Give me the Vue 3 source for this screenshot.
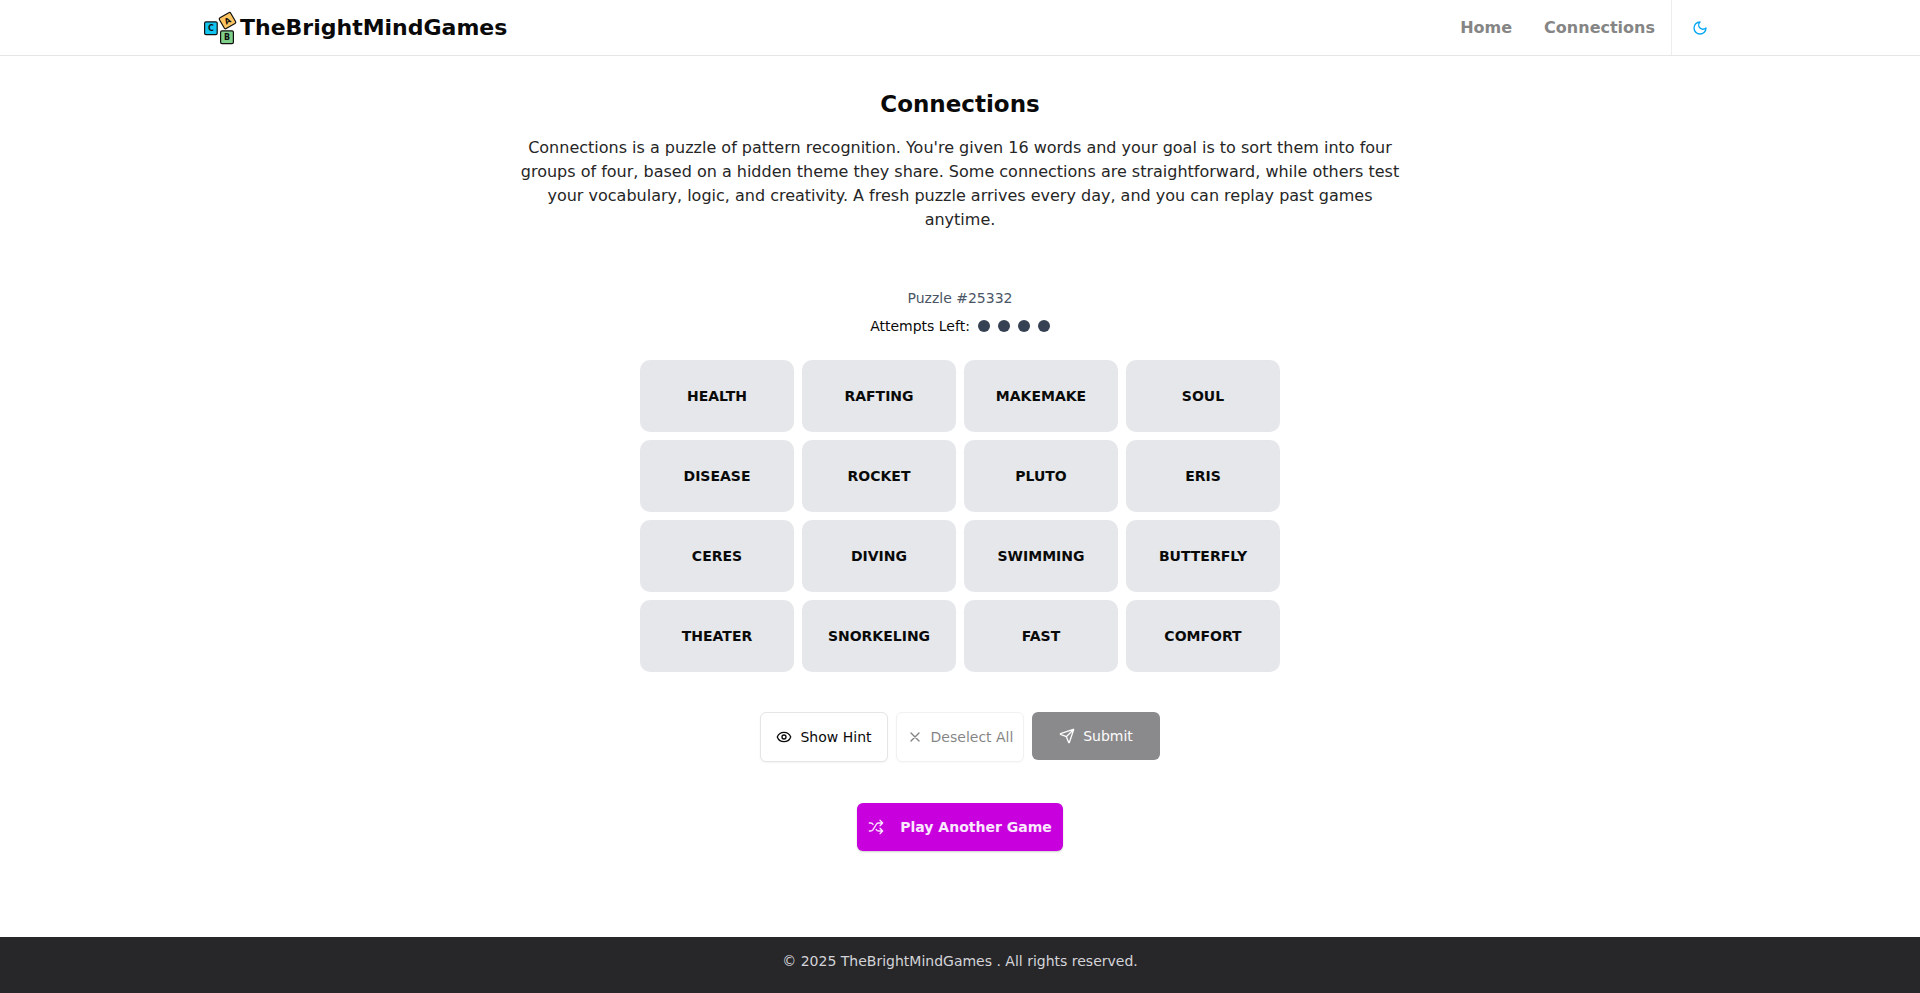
<script setup>
import { ref, computed } from 'vue'

const words = [
  'HEALTH', 'RAFTING', 'MAKEMAKE', 'SOUL',
  'DISEASE', 'ROCKET', 'PLUTO', 'ERIS',
  'CERES', 'DIVING', 'SWIMMING', 'BUTTERFLY',
  'THEATER', 'SNORKELING', 'FAST', 'COMFORT',
]
const attempts = 4
const selected = ref([])
const canDeselect = computed(() => selected.value.length > 0)
const canSubmit = computed(() => selected.value.length === 4)

function toggle(word) {
  if (selected.value.includes(word)) {
    selected.value = selected.value.filter((w) => w !== word)
  } else if (selected.value.length < 4) {
    selected.value = [...selected.value, word]
  }
}
</script>

<template>
  <div class="page">
    <header class="header">
      <div class="header-inner">
        <a class="brand" href="#">
          <svg class="logo" viewBox="0 0 32 32" aria-hidden="true">
            <g stroke="#111" stroke-width="1.2">
              <rect x="0.6" y="9.9" width="12.6" height="12.8" rx="1.4" fill="#12c5f0" />
              <rect x="16.6" y="18.9" width="12.8" height="12.8" rx="1.4" fill="#7fd08a" />
              <rect x="17" y="2.4" width="13" height="12.4" rx="1.4" fill="#fdc562" transform="rotate(-30 23.5 8.6)" />
            </g>
            <g class="logo-letters" text-anchor="middle">
              <text x="6.9" y="19.2">C</text>
              <text x="23" y="28.2">B</text>
              <text x="23.5" y="11.5" transform="rotate(-30 23.5 8.6)">A</text>
            </g>
          </svg>
          <span>TheBrightMindGames</span>
        </a>
        <nav class="nav">
          <a href="#">Home</a>
          <a href="#">Connections</a>
          <button class="theme" type="button" aria-label="Toggle theme">
            <svg width="16" height="16" viewBox="0 0 24 24" fill="none" stroke="currentColor" stroke-width="2" stroke-linecap="round" stroke-linejoin="round">
              <path d="M12 3a6 6 0 0 0 9 9 9 9 0 1 1-9-9Z" />
            </svg>
          </button>
        </nav>
      </div>
    </header>

    <main class="main">
      <h1>Connections</h1>
      <p class="intro">
        Connections is a puzzle of pattern recognition. You're given 16 words and your goal is to sort them into four groups of four, based on a hidden theme they share. Some connections are straightforward, while others test your vocabulary, logic, and creativity. A fresh puzzle arrives every day, and you can replay past games anytime.
      </p>

      <p class="puzzle">Puzzle #25332</p>
      <div class="attempts">
        <span>Attempts Left:</span>
        <i v-for="n in attempts" :key="n" class="dot"></i>
      </div>

      <div class="board">
        <button
          v-for="word in words"
          :key="word"
          type="button"
          class="tile"
          :class="{ picked: selected.includes(word) }"
          @click="toggle(word)"
        >{{ word }}</button>
      </div>

      <div class="actions">
        <button class="btn outline" type="button">
          <svg width="16" height="16" viewBox="0 0 24 24" fill="none" stroke="currentColor" stroke-width="2" stroke-linecap="round" stroke-linejoin="round">
            <path d="M2.06 12.35a1 1 0 0 1 0-.7 10.75 10.75 0 0 1 19.88 0 1 1 0 0 1 0 .7 10.75 10.75 0 0 1-19.88 0" />
            <circle cx="12" cy="12" r="3" />
          </svg>
          Show Hint
        </button>
        <button class="btn outline" type="button" :disabled="!canDeselect" @click="selected = []">
          <svg width="16" height="16" viewBox="0 0 24 24" fill="none" stroke="currentColor" stroke-width="2" stroke-linecap="round">
            <path d="M18 6 6 18M6 6l12 12" />
          </svg>
          Deselect All
        </button>
        <button class="btn solid" type="button" :disabled="!canSubmit">
          <svg width="16" height="16" viewBox="0 0 24 24" fill="none" stroke="currentColor" stroke-width="2" stroke-linecap="round" stroke-linejoin="round">
            <path d="M14.54 21.69a.5.5 0 0 0 .93-.03l6.5-19a.5.5 0 0 0-.63-.63l-19 6.5a.5.5 0 0 0-.03.93l7.93 3.18a2 2 0 0 1 1.11 1.11zM21.85 2.15l-10.94 10.94" />
          </svg>
          Submit
        </button>
      </div>

      <button class="play" type="button">
        <svg width="16" height="16" viewBox="0 0 24 24" fill="none" stroke="currentColor" stroke-width="2" stroke-linecap="round" stroke-linejoin="round">
          <path d="m18 14 4 4-4 4M18 2l4 4-4 4M2 18h1.97a4 4 0 0 0 3.3-1.7l5.45-8.6a4 4 0 0 1 3.3-1.7H22M2 6h1.97a4 4 0 0 1 3.6 2.2M22 18h-6.04a4 4 0 0 1-3.3-1.8l-.36-.45" />
        </svg>
        <span>Play Another Game</span>
      </button>
    </main>

    <footer class="footer">© 2025 TheBrightMindGames . All rights reserved.</footer>
  </div>
</template>

<style>
body {
  margin: 0;
  background: #fff;
}
</style>

<style scoped>
.page {
  display: flex;
  flex-direction: column;
  min-height: 100vh;
  box-sizing: border-box;
  font-family: "DejaVu Sans", sans-serif;
  font-size: 14px;
  line-height: 20px;
  color: #0a0a0a;
}
button {
  font: inherit;
  color: inherit;
  cursor: pointer;
}
button:disabled {
  cursor: default;
}
svg {
  flex: none;
}

.header {
  border-bottom: 1px solid #e5e5e5;
}
.header-inner {
  display: flex;
  justify-content: space-between;
  box-sizing: border-box;
  width: 100%;
  max-width: 1536px;
  height: 55px;
  margin: 0 auto;
  padding: 0 12px;
}
.brand {
  display: flex;
  align-items: center;
  gap: 4px;
  color: #0a0a0a;
  font-size: 22px;
  font-weight: 700;
  line-height: 32px;
  text-decoration: none;
}
.logo {
  width: 32px;
  height: 32px;
  overflow: visible;
}
.logo-letters {
  fill: #111;
  font-size: 8px;
  font-weight: 700;
}
.nav {
  display: flex;
  align-items: center;
  gap: 32px;
}
.nav a {
  color: #858585;
  font-size: 16px;
  font-weight: 700;
  line-height: 24px;
  text-decoration: none;
}
.theme {
  display: flex;
  align-items: center;
  align-self: stretch;
  margin-left: -16px;
  padding: 0 8px 0 20px;
  border: 0;
  border-left: 1px solid #ededed;
  background: none;
  color: #00a6f4;
}

.main {
  display: flex;
  flex: 1;
  flex-direction: column;
  align-items: center;
  padding: 32px 16px;
}
h1 {
  margin: 0;
  font-size: 23px;
  line-height: 32px;
}
.intro {
  max-width: 896px;
  margin: 16px 0 0;
  color: #262626;
  font-size: 16px;
  line-height: 24px;
  text-align: center;
}
.puzzle {
  margin: 56px 0 8px;
  color: #4a5565;
}
.attempts {
  display: flex;
  align-items: center;
  gap: 8px;
}
.dot {
  width: 12px;
  height: 12px;
  border-radius: 50%;
  background: #364153;
}
.board {
  display: grid;
  grid-template-columns: repeat(4, 1fr);
  gap: 8px;
  width: 100%;
  max-width: 640px;
  margin-top: 24px;
}
.tile {
  height: 72px;
  padding: 0;
  border: 0;
  border-radius: 10px;
  background: #e5e7eb;
  font-weight: 700;
}
.tile.picked {
  background: #364153;
  color: #fff;
}
.actions {
  display: flex;
  align-items: flex-start;
  gap: 8px;
  margin-top: 40px;
}
.btn {
  display: flex;
  align-items: center;
  justify-content: center;
  gap: 8px;
  width: 128px;
  height: 48px;
  padding: 0;
  border: 0;
  border-radius: 6px;
  white-space: nowrap;
}
.btn.outline {
  height: 50px;
  border: 1px solid #e5e5e5;
  background: #fff;
  box-shadow: 0 1px 2px rgba(0, 0, 0, 0.05);
}
.btn.solid {
  background: #18181b;
  color: #fafafa;
}
.btn:disabled {
  opacity: 0.5;
}
.play {
  display: flex;
  align-items: center;
  gap: 16px;
  height: 48px;
  margin-top: 41px;
  padding: 0 11px;
  border: 0;
  border-radius: 6px;
  background: #c800de;
  box-shadow: 0 1px 2px rgba(0, 0, 0, 0.2);
  color: #fae8ff;
  font-weight: 700;
}
.footer {
  padding: 14px 16px 22px;
  background: #27272a;
  color: #d4d4d8;
  text-align: center;
}
</style>
